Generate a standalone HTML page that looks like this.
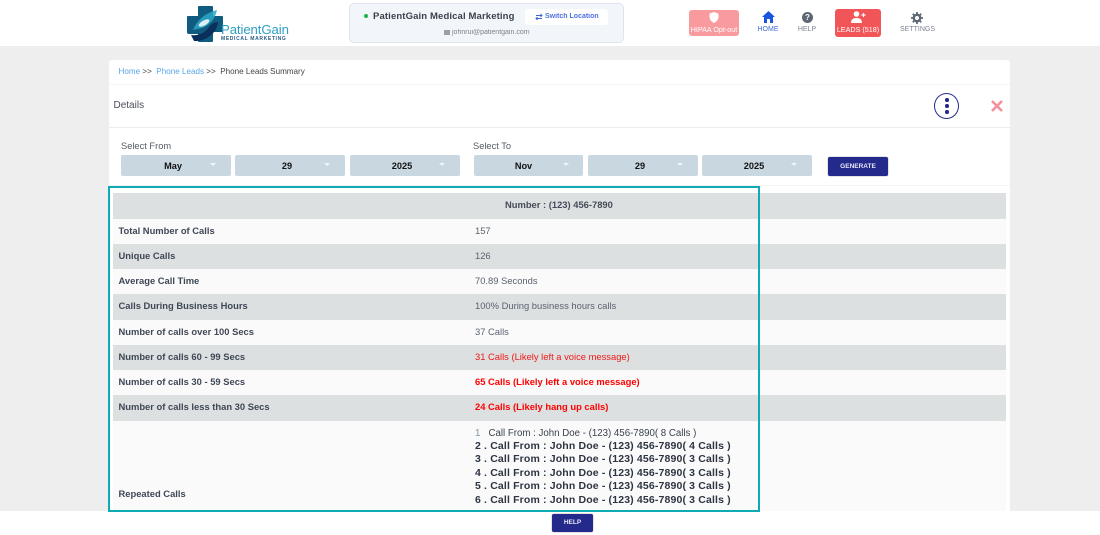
<!DOCTYPE html>
<html>
<head>
<meta charset="utf-8">
<style>
html,body{margin:0;padding:0;width:1100px;height:535px;overflow:hidden;background:#eeeeee;font-family:"Liberation Sans",sans-serif;color:#3c4452}
div,span,svg{position:absolute;box-sizing:border-box}
.t{white-space:nowrap;line-height:12px}
.row{left:113px;width:893px}
.g{background:#dce0e0}
.w{background:#fafafa}
.l{left:118.5px;font-size:9.4px;font-weight:bold;color:#3f4756;white-space:nowrap;line-height:12px}
.v{left:475px;font-size:9.4px;color:#5a6270;white-space:nowrap;line-height:12px}
.sel{top:155px;height:21px;background:#c9d8e0;border-radius:2px;font-size:9.2px;font-weight:bold;color:#111;text-align:center;line-height:23px}
.sel i{position:absolute;top:8px;width:0;height:0;border-left:3px solid transparent;border-right:3px solid transparent;border-top:3px solid #f2f6f8}
.c{left:475px;font-size:10.5px;font-weight:bold;color:#2d3442;white-space:nowrap;line-height:13px;letter-spacing:.15px}
.nav{font-size:7px;white-space:nowrap;line-height:9px;text-align:center;color:#7c8594}
.b{filter:blur(.35px)}
</style>
</head>
<body>
<div style="left:0;top:0;width:1100px;height:46px;background:#fff"></div>

<!-- logo -->
<svg class="b" style="left:186px;top:5px" width="40" height="38" viewBox="0 0 40 38">
<path d="M12 2Q12 1 13 1H26Q27 1 27 2V11H36Q37 11 37 12V26Q37 27 36 27H27V36Q27 37 26 37H13Q12 37 12 36V29H3Q1 29 1 27V12Q1 11 2 11H12z" fill="#105c80"/>
<path d="M7 25C11 15 19 8 31 5c-2 9-7 15-15 18z" fill="#2aa6c6" opacity=".85"/>
<path d="M5 30c8 1 14-2 18-8 2-3 5-5 9-5-1 9-8 17-20 19H8z" fill="#0b2f5c"/>
<ellipse cx="18" cy="18" rx="6" ry="2.500" fill="#fff" opacity=".85" transform="rotate(-30 18 18)"/>
</svg>
<div class="t b" style="left:221px;top:22px;font-size:13.2px;line-height:15px;color:#2e9fc4;letter-spacing:-.1px">PatientGain</div>
<div class="t b" style="left:221px;top:36px;font-size:5px;line-height:6px;font-weight:bold;color:#2a5b86;letter-spacing:.65px">MEDICAL MARKETING</div>

<!-- location box -->
<div style="left:349px;top:3px;width:275px;height:40px;background:#f2f6fb;border:1px solid #dde4ee;border-radius:5px"></div>
<div style="left:364px;top:14px;width:4px;height:4px;border-radius:50%;background:#22b14c"></div>
<div class="t b" style="left:373px;top:11px;font-size:9.500px;font-weight:bold;color:#3a3f4a;letter-spacing:.13px">PatientGain Medical Marketing</div>
<div style="left:525px;top:9px;width:83px;height:16px;background:#fff;border-radius:3px"></div>
<svg style="left:535px;top:13px" width="8" height="8" viewBox="0 0 8 8"><path d="M1 2.500h6M5.500 1L7 2.500 5.500 4M7 5.500H1M2.500 4L1 5.500 2.500 7" fill="none" stroke="#3f66d8" stroke-width="1"/></svg>
<div class="t b" style="left:545px;top:11px;font-size:7px;font-weight:bold;color:#4f72e0">Switch Location</div>
<div style="left:444px;top:30px;width:6px;height:5px;background:#9aa0a8"></div>
<div class="t b" style="left:452px;top:27px;font-size:7px;color:#7b828c">johnrui@patientgain.com</div>

<!-- nav -->
<div style="left:689px;top:10px;width:50px;height:26px;background:#f99a9e;border-radius:3px"></div>
<svg style="left:709px;top:12px" width="10" height="11" viewBox="0 0 10 11"><path d="M5 0l4.500 1.600v3.400c0 2.700-2 4.800-4.500 6-2.500-1.200-4.500-3.300-4.500-6V1.600z" fill="#fff"/></svg>
<div class="nav" style="left:689px;top:25px;width:50px;color:#fff;font-size:7.200px">HIPAA Opt-out</div>

<svg style="left:762px;top:11px" width="13" height="12" viewBox="0 0 13 12"><path d="M6.500 0L13 6h-2v6H8V8H5v4H2V6H0z" fill="#1a56e0"/></svg>
<div class="nav" style="left:752px;top:25px;width:32px;color:#3f6ad8">HOME</div>

<div style="left:802px;top:12px;width:11px;height:11px;border-radius:50%;background:#5d6673;color:#fff;font-size:8px;font-weight:bold;text-align:center;line-height:11px">?</div>
<div class="nav" style="left:792px;top:25px;width:30px">HELP</div>

<div style="left:835px;top:9px;width:46px;height:28px;background:#f25558;border-radius:3px"></div>
<svg style="left:851px;top:11px" width="15" height="12" viewBox="0 0 15 12"><circle cx="5.500" cy="3" r="2.800" fill="#fff"/><path d="M0 12c0-3.500 2-5 5.500-5s5.500 1.500 5.500 5z" fill="#fff"/><path d="M12.500 2v4M10.500 4h4" stroke="#fff" stroke-width="1.200"/></svg>
<div class="nav" style="left:835px;top:25px;width:46px;color:#fff;font-size:7.200px">LEADS (518)</div>

<svg style="left:911px;top:12px" width="12" height="12" viewBox="0 0 12 12"><circle cx="6" cy="6" r="3.200" fill="none" stroke="#5d6673" stroke-width="2.400"/><path d="M6 0v2.500M6 9.500V12M0 6h2.500M9.500 6H12M1.800 1.800l1.800 1.800M8.400 8.400l1.800 1.800M1.800 10.200l1.800-1.800M8.400 3.600l1.800-1.800" stroke="#5d6673" stroke-width="1.800"/></svg>
<div class="nav" style="left:897px;top:25px;width:41px">SETTINGS</div>

<!-- card -->
<div style="left:109px;top:60px;width:901px;height:460px;background:#fff;border-radius:3px"></div>
<div style="left:109px;top:84px;width:901px;height:1px;background:#f4f4f4"></div>
<div style="left:109px;top:127px;width:901px;height:1px;background:#ececec"></div>
<div style="left:109px;top:185px;width:901px;height:1px;background:#f4f4f4"></div>

<div class="t" style="left:118.500px;top:66px;font-size:8.100px;color:#444"><span style="position:static;color:#5aa5e8">Home</span> &gt;&gt;&nbsp; <span style="position:static;color:#5aa5e8">Phone Leads</span> &gt;&gt;&nbsp; Phone Leads Summary</div>
<div class="t" style="left:113.500px;top:100px;font-size:10px;color:#4a4f58">Details</div>

<div style="left:934px;top:93px;width:25px;height:26px;border:1.500px solid #23298c;border-radius:50%"></div>
<div style="left:945px;top:98px;width:3.500px;height:3.500px;border-radius:50%;background:#23298c"></div>
<div style="left:945px;top:104px;width:3.500px;height:3.500px;border-radius:50%;background:#23298c"></div>
<div style="left:945px;top:110px;width:3.500px;height:3.500px;border-radius:50%;background:#23298c"></div>
<svg style="left:990px;top:98.500px" width="14" height="14" viewBox="0 0 14 14"><path d="M2 2l10 10M12 2L2 12" stroke="#f3909a" stroke-width="2.600"/></svg>

<div class="t" style="left:121px;top:140px;font-size:9.300px;color:#555b66">Select From</div>
<div class="t" style="left:473px;top:140px;font-size:9.300px;color:#555b66">Select To</div>

<div class="sel" style="left:121px;width:110px;padding-right:6px">May<i style="left:89px"></i></div>
<div class="sel" style="left:235px;width:110px;padding-right:6px">29<i style="left:89px"></i></div>
<div class="sel" style="left:350px;width:110px;padding-right:6px">2025<i style="left:89px"></i></div>
<div class="sel" style="left:474px;width:109px;padding-right:10px">Nov<i style="left:89px"></i></div>
<div class="sel" style="left:588px;width:110px;padding-right:6px">29<i style="left:89px"></i></div>
<div class="sel" style="left:702px;width:110px;padding-right:6px">2025<i style="left:89px"></i></div>
<div style="left:828px;top:157px;width:60px;height:19px;background:#24298c;border-radius:2px;color:#e8e8f5;font-size:6.500px;font-weight:bold;text-align:center;line-height:19px;box-shadow:0 0 1px #555">GENERATE</div>

<!-- table -->
<div class="row g" style="top:193px;height:26px"></div>
<div class="t" style="left:505px;top:199px;font-size:9.400px;font-weight:bold;color:#454c5a">Number : (123) 456-7890</div>

<div class="row w" style="top:219px;height:25px"></div>
<div class="l" style="top:225px">Total Number of Calls</div><div class="v" style="top:225px">157</div>

<div class="row g" style="top:244px;height:25px"></div>
<div class="l" style="top:250px">Unique Calls</div><div class="v" style="top:250px">126</div>

<div class="row w" style="top:269px;height:25px"></div>
<div class="l" style="top:275px">Average Call Time</div><div class="v" style="top:275px">70.89 Seconds</div>

<div class="row g" style="top:294px;height:26px"></div>
<div class="l" style="top:300px">Calls During Business Hours</div><div class="v" style="top:300px">100% During business hours calls</div>

<div class="row w" style="top:320px;height:25px"></div>
<div class="l" style="top:326px">Number of calls over 100 Secs</div><div class="v" style="top:326px">37 Calls</div>

<div class="row g" style="top:345px;height:25px"></div>
<div class="l" style="top:351px">Number of calls 60 - 99 Secs</div><div class="v" style="top:351px;color:#f01818">31 Calls (Likely left a voice message)</div>

<div class="row w" style="top:370px;height:25px"></div>
<div class="l" style="top:376px">Number of calls 30 - 59 Secs</div><div class="v" style="top:376px;color:#f00;font-weight:bold">65 Calls (Likely left a voice message)</div>

<div class="row g" style="top:395px;height:25.500px"></div>
<div class="l" style="top:401px">Number of calls less than 30 Secs</div><div class="v" style="top:401px;color:#f00;font-weight:bold">24 Calls (Likely hang up calls)</div>

<div class="row w" style="top:420.500px;height:91px"></div>
<div class="l" style="top:488px">Repeated Calls</div>

<div class="t" style="left:475px;top:428px;font-size:9.700px;color:#3a4150"><span style="position:static;color:#7c93a8">1 </span>&nbsp;&nbsp;Call From : John Doe - (123) 456-7890( 8 Calls )</div>
<div class="c" style="top:440px">2 . Call From : John Doe - (123) 456-7890( 4 Calls )</div>
<div class="c" style="top:453px">3 . Call From : John Doe - (123) 456-7890( 3 Calls )</div>
<div class="c" style="top:467px">4 . Call From : John Doe - (123) 456-7890( 3 Calls )</div>
<div class="c" style="top:480px">5 . Call From : John Doe - (123) 456-7890( 3 Calls )</div>
<div class="c" style="top:494px">6 . Call From : John Doe - (123) 456-7890( 3 Calls )</div>

<!-- footer -->
<div style="left:0;top:511px;width:1100px;height:24px;background:#fff"></div>
<div style="left:552px;top:514px;width:41px;height:18px;background:#24298c;border-radius:2px;color:#e8e8f5;font-size:6.500px;font-weight:bold;text-align:center;line-height:18px;box-shadow:0 0 1px #555">HELP</div>

<!-- teal highlight -->
<div style="left:108px;top:186px;width:652px;height:326px;border:2px solid #0eabb6"></div>
</body>
</html>
